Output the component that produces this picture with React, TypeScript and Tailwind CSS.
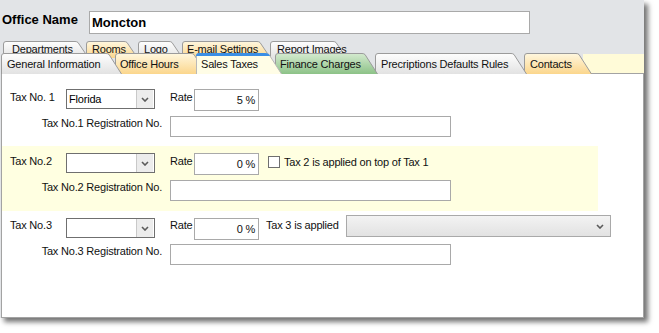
import React from "react";

type Kind = "gray" | "orange" | "green" | "sel";
type TabDef = { label: string; slot: number; w: number; kind: Kind; pl: number };

const GRADS: Record<Kind, [string, string]> = {
  gray: ["#fefefe", "#e2e2e2"],
  orange: ["#fff7df", "#fbd68c"],
  green: ["#d4eacf", "#8cc287"],
  sel: ["#fffde6", "#fffde6"],
};

function TabShape({ w, h, slant, kind, id }: { w: number; h: number; slant: number; kind: Kind; id: string }) {
  const [c1, c2] = GRADS[kind];
  const d = `M0.5 ${h + 1} V3 Q0.5 0.5 3 0.5 H${w - slant - 2} Q${w - slant} 0.5 ${w - slant + 1} 1.5 L${w - 0.5} ${h + 1}`;
  return (
    <svg className="absolute left-0 top-0 overflow-visible" width={w} height={h}>
      <defs>
        <linearGradient id={id} x1="0" y1="0" x2="0" y2="1">
          <stop offset="0" stopColor={c1} />
          <stop offset="1" stopColor={c2} />
        </linearGradient>
      </defs>
      <path d={d} fill={`url(#${id})`} stroke={kind === "sel" ? "#b9b9b9" : "#9b9b9b"} />
      {kind === "sel" && (
        <path d={`M0 3 Q0 0 3 0 H${w - slant - 3} Q${w - slant + 1} 0 ${w - slant + 2} 3 Z`} fill="#3a8ee6" />
      )}
    </svg>
  );
}

const row1: TabDef[] = [
  { label: "Departments", slot: 83, w: 86, kind: "gray", pl: 9 },
  { label: "Rooms", slot: 52, w: 52, kind: "orange", pl: 6 },
  { label: "Logo", slot: 44, w: 45, kind: "gray", pl: 6 },
  { label: "E-mail Settings", slot: 88, w: 89, kind: "orange", pl: 5 },
  { label: "Report Images", slot: 76, w: 77, kind: "gray", pl: 7 },
];

const row2: TabDef[] = [
  { label: "General Information", slot: 114, w: 121, kind: "gray", pl: 6 },
  { label: "Office Hours", slot: 81, w: 92, kind: "orange", pl: 5 },
  { label: "Sales Taxes", slot: 79, w: 86, kind: "sel", pl: 5 },
  { label: "Finance Charges", slot: 100, w: 103, kind: "green", pl: 5 },
  { label: "Precriptions Defaults Rules", slot: 149, w: 152, kind: "gray", pl: 6 },
  { label: "Contacts", slot: 59, w: 68, kind: "orange", pl: 6 },
];

function Chevron() {
  return (
    <svg width="8" height="5" viewBox="0 0 8 5">
      <path d="M1 1 L4 4 L7 1" fill="none" stroke="#5a5a5a" strokeWidth="1.6" />
    </svg>
  );
}

function Select({ value }: { value?: string }) {
  return (
    <div className="flex h-[20px] w-[89px] shrink-0 border border-[#6f6f6f] bg-white">
      <div className="flex flex-1 items-center pl-[2px] text-[11px] leading-[13px] text-black">{value}</div>
      <div className="flex w-[17px] items-center justify-center border-l border-[#c9c9c9] bg-[#ececec] mr-[1px]">
        <Chevron />
      </div>
    </div>
  );
}

function Rate({ value }: { value: string }) {
  return (
    <div className="flex h-[22px] w-[65px] shrink-0 items-center justify-end border border-[#a9a9a9] bg-white pr-[3px] text-[11px] leading-[13px]">
      {value}
    </div>
  );
}

function Reg({ n }: { n: string }) {
  return (
    <div className="mt-[5px] flex items-start">
      <span className="w-[152px] shrink-0 pt-[1px] text-right">Tax No.{n} Registration No.</span>
      <div className="ml-[8px] h-[21px] w-[281px] border border-[#a9a9a9] bg-white" />
    </div>
  );
}

export default function App() {
  return (
    <div
      className="min-h-[333px] w-[659px] bg-white text-[11px] leading-[13px] tracking-[-0.2px] text-[#111]"
      style={{ fontFamily: '"Liberation Sans", Arial, sans-serif' }}
    >
      <div className="flex h-[318px] w-[644px] flex-col bg-[#e2e4e7] shadow-[4px_4px_5px_rgba(0,0,0,0.55)]">
        {/* Office name */}
        <div className="flex items-start pl-[2px] pt-[11px] tracking-normal">
          <span className="mt-[1px] w-[87px] text-[13px] font-bold leading-[15px] text-black">Office Name</span>
          <div className="flex h-[23px] w-[441px] items-center border border-[#a9a9a9] bg-white pl-[2px] text-[13px] font-bold leading-[15px] text-black">
            Moncton
          </div>
        </div>

        {/* Tabs */}
        <div className="mt-[7px] h-[32px]">
          <div className="relative z-0 flex h-[16px] pl-[3px]">
            {row1.map((t, i) => (
              <div key={t.label} className="relative shrink-0" style={{ width: t.slot, zIndex: 10 - i }}>
                <TabShape w={t.w} h={16} slant={12} kind={t.kind} id={`r1-${i}`} />
                <div className="relative whitespace-nowrap pt-[2px]" style={{ paddingLeft: t.pl }}>
                  {t.label}
                </div>
              </div>
            ))}
          </div>
          <div className="relative z-10 -mt-[4px] flex h-[20px] pl-[1px]">
            {row2.map((t, i) => (
              <div
                key={t.label}
                className="relative shrink-0"
                style={{ width: t.slot, zIndex: t.kind === "sel" ? 20 : 10 - i }}
              >
                <TabShape w={t.w} h={20} slant={14} kind={t.kind} id={`r2-${i}`} />
                <div className="relative whitespace-nowrap pt-[5px]" style={{ paddingLeft: t.pl }}>
                  {t.label}
                </div>
              </div>
            ))}
            <div className="relative z-0 mt-[1px] flex-1 bg-[#fffbd8]" />
          </div>
        </div>

        {/* Panel */}
        <div className="ml-[1px] flex h-[245px] w-[643px] flex-col border border-[#a3a3a3] bg-white pt-[8px]">
          {/* Tax 1 */}
          <div className="flex flex-col pb-[9px] pl-[8px] pt-[7px]">
            <div className="flex h-[22px] items-start">
              <span className="w-[56px] shrink-0 pt-[2px]">Tax No. 1</span>
              <Select value="Florida" />
              <span className="ml-[15px] w-[24px] shrink-0 pt-[2px]">Rate</span>
              <Rate value="5 %" />
            </div>
            <Reg n="1" />
          </div>

          {/* Tax 2 */}
          <div className="flex w-[596px] flex-col bg-[#ffffe1] pb-[10px] pl-[8px] pt-[7px]">
            <div className="flex h-[22px] items-start">
              <span className="w-[56px] shrink-0 pt-[2px]">Tax No.2</span>
              <Select />
              <span className="ml-[15px] w-[24px] shrink-0 pt-[2px]">Rate</span>
              <Rate value="0 %" />
              <div className="ml-[9px] mt-[3px] h-[12px] w-[12px] shrink-0 border border-[#6f6f6f] bg-white" />
              <span className="ml-[4px] pt-[3px]">Tax 2 is applied on top of Tax 1</span>
            </div>
            <Reg n="2" />
          </div>

          {/* Tax 3 */}
          <div className="flex flex-col pl-[8px] pt-[7px]">
            <div className="flex h-[22px] items-start">
              <span className="w-[56px] shrink-0 pt-[1px]">Tax No.3</span>
              <Select />
              <span className="ml-[15px] w-[24px] shrink-0 pt-[1px]">Rate</span>
              <Rate value="0 %" />
              <span className="ml-[7px] w-[80px] shrink-0 pt-[1px]">Tax 3 is applied</span>
              <div className="-mt-[3px] flex h-[22px] w-[265px] shrink-0 items-center justify-end border border-[#a9a9a9] bg-gradient-to-b from-[#f3f3f3] to-[#e2e2e2] pr-[6px]">
                <Chevron />
              </div>
            </div>
            <div className="-mt-[1px]">
              <Reg n="3" />
            </div>
          </div>
        </div>
      </div>
    </div>
  );
}
